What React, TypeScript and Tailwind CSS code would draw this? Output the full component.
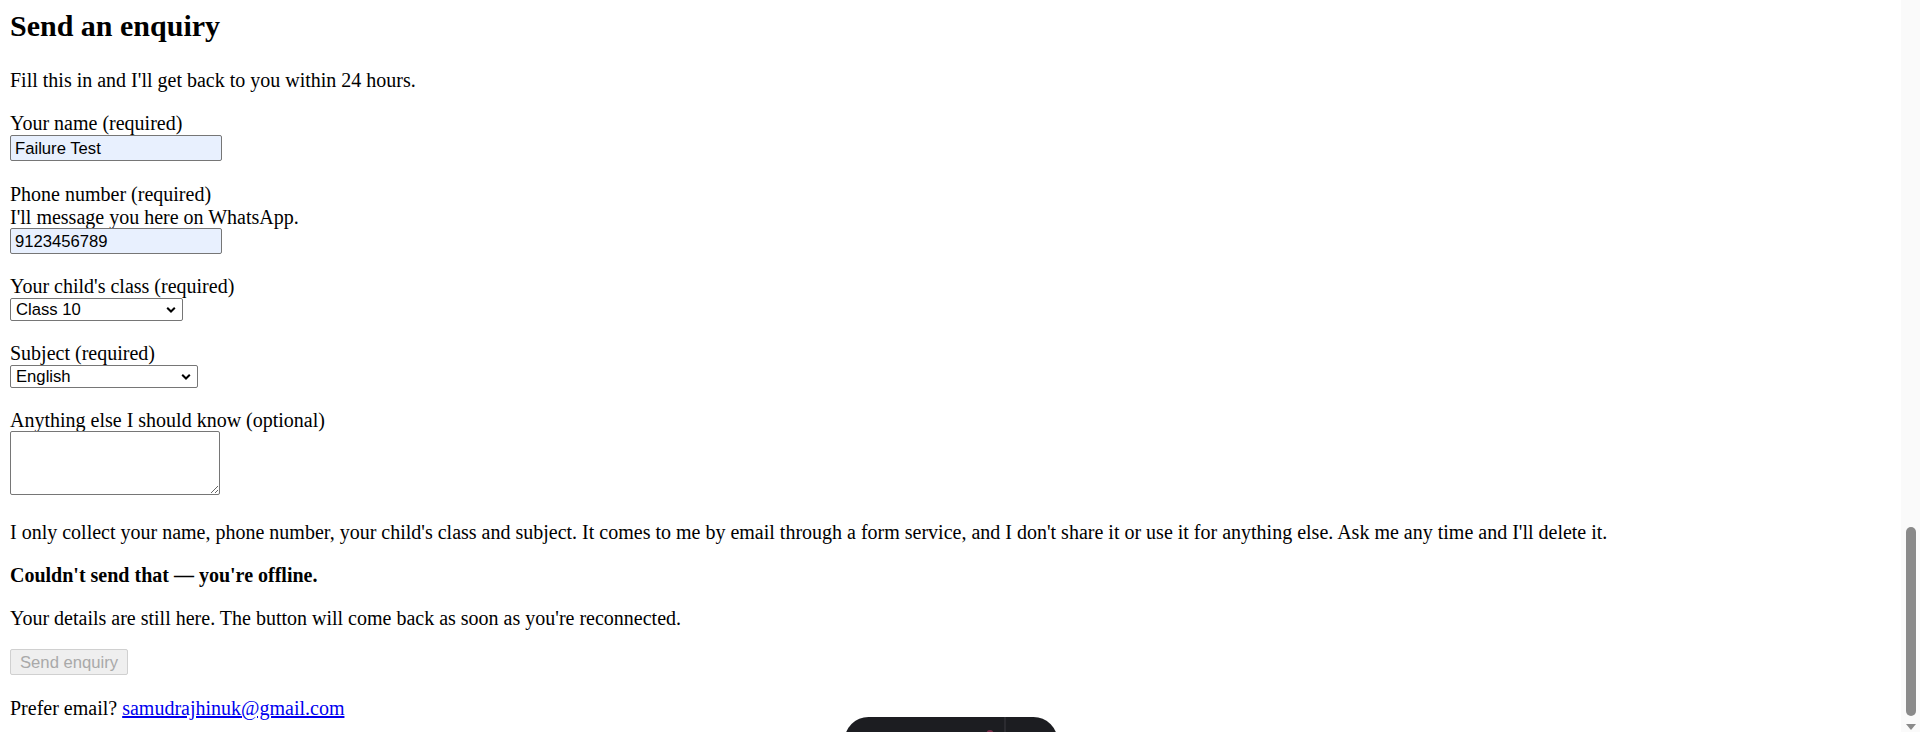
import React from "react";

const serif = "font-['Liberation_Serif','Times_New_Roman',serif]";
const sans = "font-['Liberation_Sans',Arial,sans-serif]";

const Chevron = () => (
  <svg
    width="10"
    height="7"
    viewBox="0 0 10 7"
    className="pointer-events-none absolute right-[7px] top-1/2 -translate-y-1/2"
  >
    <polyline points="1.2,1.2 5,5 8.8,1.2" fill="none" stroke="#000" strokeWidth="2" />
  </svg>
);

const Select = ({ value, options, width }: { value: string; options: string[]; width: string }) => (
  <div className={`relative ${width} h-[23px]`}>
    <select
      defaultValue={value}
      className={`${sans} block h-full w-full appearance-none rounded-[2px] border border-[#767676] bg-white pl-[5px] pr-[20px] text-[16.67px] leading-[21px] text-black outline-none`}
    >
      {options.map((o) => (
        <option key={o}>{o}</option>
      ))}
    </select>
    <Chevron />
  </div>
);

export default function App() {
  return (
    <div className={`${serif} flex h-[732px] w-[1920px] overflow-hidden bg-white text-[20px] text-black`}>
      <main className="relative flex flex-1 flex-col items-start overflow-hidden pl-[10px]">
        <h2 className="mt-[8px] text-[30px] font-bold leading-[35px]">Send an enquiry</h2>
        <p className="mt-[26px] leading-[23px]">Fill this in and I'll get back to you within 24 hours.</p>

        {/* name */}
        <label className="mt-[20px] leading-[23px]">Your name (required)</label>
        <input
          defaultValue="Failure Test"
          className={`${sans} block h-[26px] w-[212px] rounded-[2px] border border-[#767676] bg-[#e8f0fe] px-[4px] pt-[1px] text-[16.67px] text-black outline-none`}
        />

        {/* phone */}
        <label className="mt-[22px] leading-[23px]">Phone number (required)</label>
        <span className="leading-[23px]">I'll message you here on WhatsApp.</span>
        <input
          defaultValue="9123456789"
          className={`${sans} mt-[-1px] block h-[26px] w-[212px] rounded-[2px] border border-[#767676] bg-[#e8f0fe] px-[4px] pt-[1px] text-[16.67px] text-black outline-none`}
        />

        {/* class */}
        <label className="mt-[21px] leading-[23px]">Your child's class (required)</label>
        <Select value="Class 10" options={["Class 9", "Class 10", "Class 11", "Class 12"]} width="w-[173px]" />

        {/* subject */}
        <label className="mt-[21px] leading-[23px]">Subject (required)</label>
        <Select value="English" options={["English", "Mathematics", "Science"]} width="w-[188px]" />

        {/* notes */}
        <label className="mt-[21px] leading-[23px]">Anything else I should know (optional)</label>
        <textarea className="mt-[-1px] block h-[64px] w-[210px] rounded-[2px] border border-[#767676] bg-white outline-none" />

        <p className="mt-[26px] leading-[23px]">
          I only collect your name, phone number, your child's class and subject. It comes to me by email through a form
          service, and I don't share it or use it for anything else. Ask me any time and I'll delete it.
        </p>
        <p className="mt-[20px] font-bold leading-[23px]">Couldn't send that — you're offline.</p>
        <p className="mt-[20px] leading-[23px]">
          Your details are still here. The button will come back as soon as you're reconnected.
        </p>

        <button
          disabled
          className={`${sans} mt-[19px] h-[26px] rounded-[2px] border border-[#d0d0d0] bg-[#efefef] px-[9px] text-[16.67px] text-[#a9a9a9]`}
        >
          Send enquiry
        </button>

        <p className="mt-[22px] leading-[23px]">
          Prefer email?{" "}
          <a href="mailto:samudrajhinuk@gmail.com" className="text-[#0000ee] underline">
            samudrajhinuk@gmail.com
          </a>
        </p>

        {/* offline toast, cut by the bottom of the window */}
        <div className={`${sans} absolute left-1/2 top-[717px] flex h-[48px] w-[213px] -translate-x-1/2 items-start rounded-[24px] bg-[#1c1d21] pl-[22px]`}>
          <span className="mt-[12px] text-[14px] leading-[18px] text-[#9a9ca3]">Network offline</span>
          <span className="ml-auto mr-[11px] mt-[13px] h-[7px] w-[7px] rounded-full bg-[#7a2d4a]" />
          <span className="h-full w-px bg-[#3a3b40]" />
          <span className="w-[52px]" />
        </div>
      </main>

      {/* scrollbar */}
      <div className="flex w-[19px] flex-col items-center bg-[#fafafa]">
        <div className="mt-[527px] h-[189px] w-[10px] rounded-full bg-[#8a8a8a]" />
        <svg width="10" height="6" viewBox="0 0 10 6" className="mt-[8px]">
          <polygon points="0,0 10,0 5,6" fill="#8a8a8a" />
        </svg>
      </div>
    </div>
  );
}
